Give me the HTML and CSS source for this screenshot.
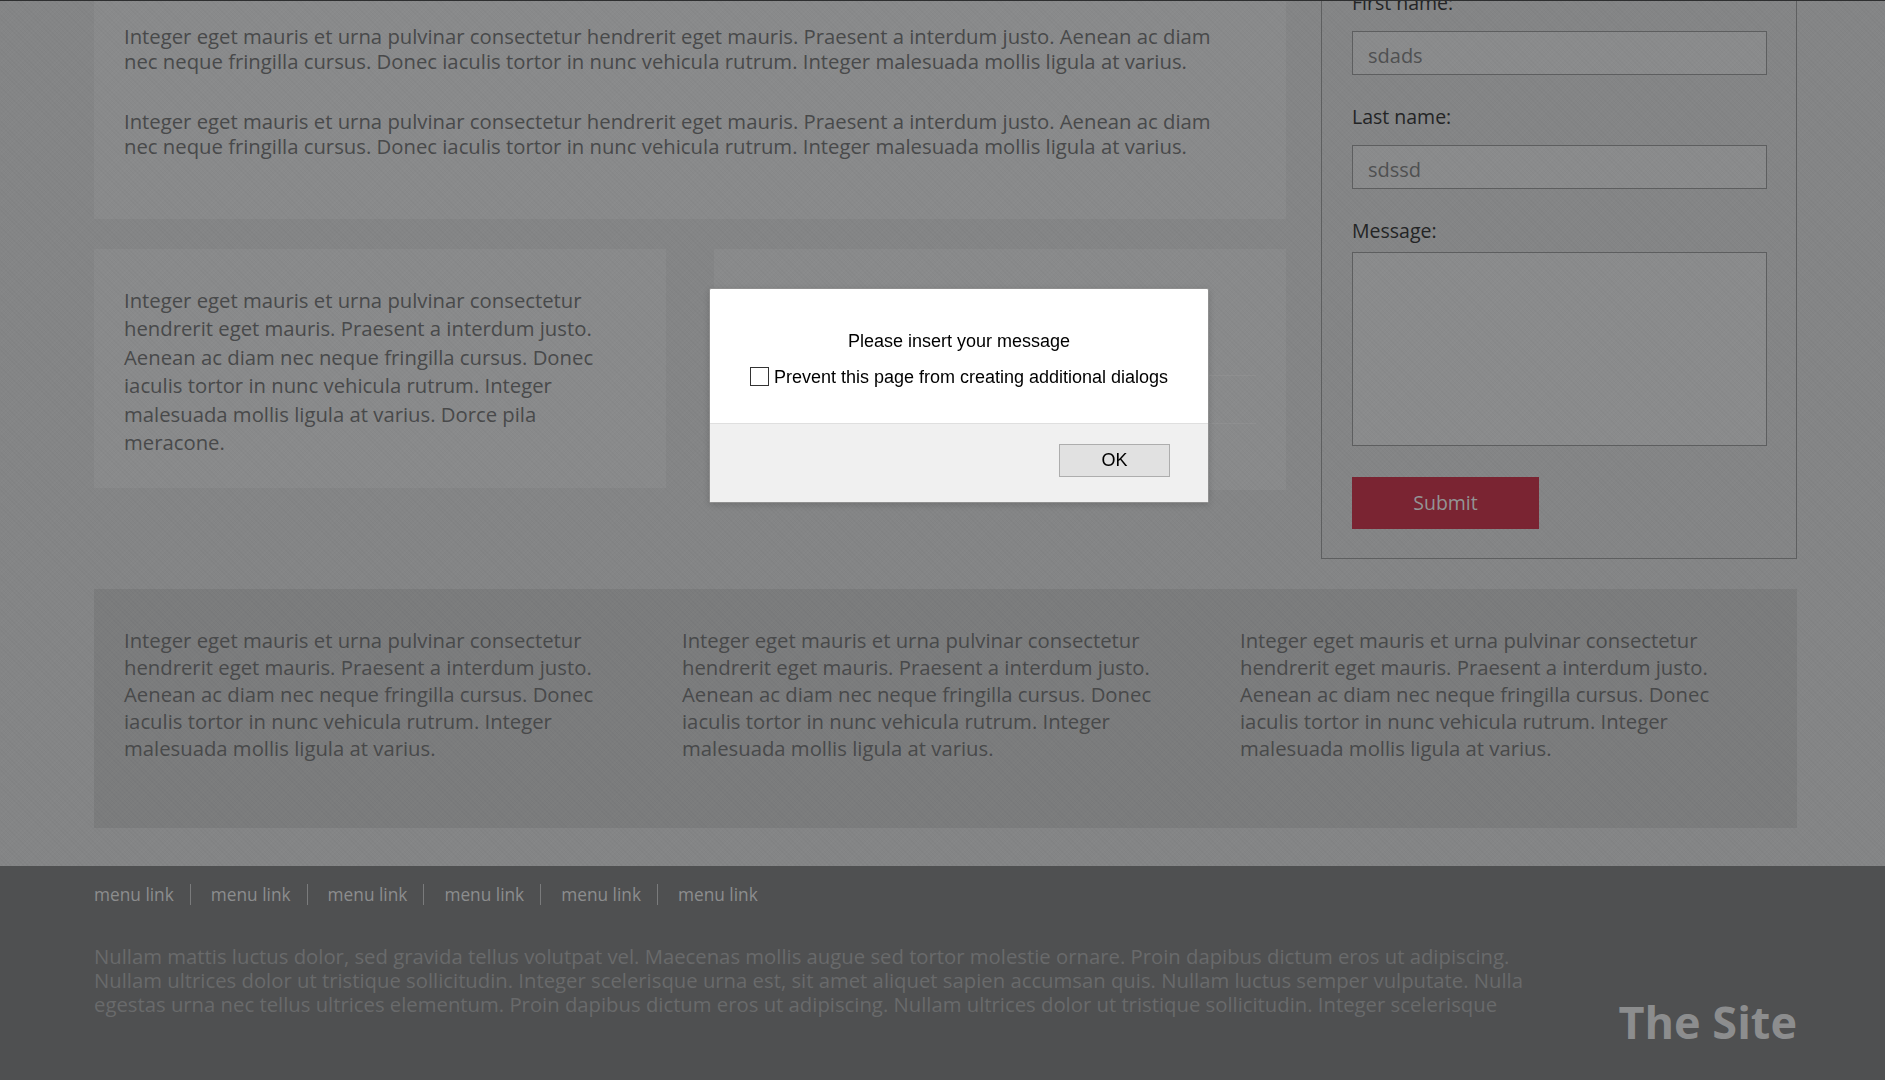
FILE: index.html
```html
<!DOCTYPE html>
<html lang="en">
<head>
<meta charset="utf-8">
<title>The Site</title>
<link rel="stylesheet" href="styles.css">
</head>
<body>
<div class="wrap">
  <div class="main">
    <div class="left-col">
      <section class="panel top-panel">
        <p>Integer eget mauris et urna pulvinar consectetur hendrerit eget mauris. Praesent a interdum justo. Aenean ac diam nec neque fringilla cursus. Donec iaculis tortor in nunc vehicula rutrum. Integer malesuada mollis ligula at varius.</p>
        <p>Integer eget mauris et urna pulvinar consectetur hendrerit eget mauris. Praesent a interdum justo. Aenean ac diam nec neque fringilla cursus. Donec iaculis tortor in nunc vehicula rutrum. Integer malesuada mollis ligula at varius.</p>
      </section>
      <div class="cards">
        <section class="panel card">
          <p>Integer eget mauris et urna pulvinar consectetur hendrerit eget mauris. Praesent a interdum justo. Aenean ac diam nec neque fringilla cursus. Donec iaculis tortor in nunc vehicula rutrum. Integer malesuada mollis ligula at varius. Dorce pila meracone.</p>
        </section>
        <section class="panel card card-right">
          <div class="rule"></div>
          <div class="rule"></div>
        </section>
      </div>
    </div>
    <form class="form-panel">
      <label class="lbl" for="fn">First name:</label>
      <input class="field" id="fn" type="text" value="sdads">
      <label class="lbl" for="ln">Last name:</label>
      <input class="field" id="ln" type="text" value="sdssd">
      <label class="lbl lbl-msg" for="msg">Message:</label>
      <textarea class="field area" id="msg"></textarea>
      <button class="submit" type="button">Submit</button>
    </form>
  </div>
  <section class="bottom-panel">
    <p>Integer eget mauris et urna pulvinar consectetur hendrerit eget mauris. Praesent a interdum justo. Aenean ac diam nec neque fringilla cursus. Donec iaculis tortor in nunc vehicula rutrum. Integer malesuada mollis ligula at varius.</p>
    <p>Integer eget mauris et urna pulvinar consectetur hendrerit eget mauris. Praesent a interdum justo. Aenean ac diam nec neque fringilla cursus. Donec iaculis tortor in nunc vehicula rutrum. Integer malesuada mollis ligula at varius.</p>
    <p>Integer eget mauris et urna pulvinar consectetur hendrerit eget mauris. Praesent a interdum justo. Aenean ac diam nec neque fringilla cursus. Donec iaculis tortor in nunc vehicula rutrum. Integer malesuada mollis ligula at varius.</p>
  </section>
</div>
<footer class="footer">
  <div class="footer-inner">
    <nav class="menu">
      <a href="#">menu link</a>
      <a href="#">menu link</a>
      <a href="#">menu link</a>
      <a href="#">menu link</a>
      <a href="#">menu link</a>
      <a href="#">menu link</a>
    </nav>
    <div class="footer-bottom">
      <p class="footer-text">Nullam mattis luctus dolor, sed gravida tellus volutpat vel. Maecenas mollis augue sed tortor molestie ornare. Proin dapibus dictum eros ut adipiscing. Nullam ultrices dolor ut tristique sollicitudin. Integer scelerisque urna est, sit amet aliquet sapien accumsan quis. Nullam luctus semper vulputate. Nulla egestas urna nec tellus ultrices elementum. Proin dapibus dictum eros ut adipiscing. Nullam ultrices dolor ut tristique sollicitudin. Integer scelerisque</p>
      <div class="site-name">The Site</div>
    </div>
  </div>
</footer>
<div class="dialog" role="alertdialog">
  <div class="dialog-body">
    <p class="dialog-msg">Please insert your message</p>
    <label class="dialog-check"><span class="box"></span>Prevent this page from creating additional dialogs</label>
  </div>
  <div class="dialog-foot">
    <button class="ok" type="button">OK</button>
  </div>
</div>
</body>
</html>
```

FILE: styles.css
```css
* { box-sizing: border-box; }

html, body {
  margin: 0;
  padding: 0;
  overflow: hidden;
  height: 100%;
}

body {
  background-color: #848586;
  background-image:
    repeating-linear-gradient(45deg, rgba(0,0,0,0.025) 0 1px, transparent 1px 3px),
    repeating-linear-gradient(-45deg, rgba(255,255,255,0.02) 0 1px, transparent 1px 3px);
  font-family: "Open Sans", "Lato", sans-serif;
  color: #48494a;
  border-top: 1px solid #2e2f30;
}

p { margin: 0; }

.wrap {
  width: 1703px;
  margin: -42px 0 0 94px;
}

.main {
  display: grid;
  grid-template-columns: 1192px 476px;
  column-gap: 35px;
}

.panel {
  background-color: rgba(255,255,255,0.045);
}

.top-panel {
  padding: 64.5px 30px 60px 30px;
  font-size: 20.3px;
  line-height: 25px;
}

.top-panel p { width: 1120px; }

.top-panel p + p { margin-top: 35px; }

.cards {
  display: grid;
  grid-template-columns: 572px 572px;
  column-gap: 48px;
  margin-top: 30px;
  align-items: start;
}

.card {
  padding: 37px 30px 30px 30px;
  font-size: 20.3px;
  line-height: 28.5px;
  height: 239px;
}

.card p { width: 490px; }

.card-right {
  height: 241px;
  padding-top: 126px;
}

.card-right .rule {
  height: 1px;
  background: rgba(255,255,255,0.05);
  margin-bottom: 47px;
}

.form-panel {
  display: flex;
  flex-direction: column;
  align-items: flex-start;
  border: 1px solid #5e5f60;
  padding: 31px 29px 29px 30px;
}

.lbl {
  font-size: 19.5px;
  line-height: 24px;
  color: #232425;
  margin-bottom: 15.5px;
}

.lbl-msg { margin-bottom: 8.5px; }

.field {
  display: block;
  width: 415px;
  height: 44px;
  margin: 0 0 30.5px 0;
  padding: 6px 15px 0 15px;
  border: 1px solid #5d5e5f;
  background-color: rgba(255,255,255,0.05);
  font-family: "Open Sans", "Lato", sans-serif;
  font-size: 20px;
  color: #4f5051;
  outline: none;
}

.area {
  height: 194px;
  resize: none;
  margin-bottom: 31px;
}

.submit {
  width: 187px;
  height: 52px;
  border: none;
  background-color: #7a2432;
  color: #939495;
  font-family: "Open Sans", "Lato", sans-serif;
  font-size: 19.5px;
  padding: 0;
}

.bottom-panel {
  margin-top: 30px;
  height: 239px;
  background-color: rgba(0,0,0,0.065);
  padding: 38px 30px 0 30px;
  display: grid;
  grid-template-columns: repeat(3, 490px);
  column-gap: 68px;
  font-size: 20.3px;
  line-height: 27px;
}

.footer {
  margin-top: 38px;
  background-color: #4f5051;
  height: 300px;
}

.footer-inner {
  width: 1703px;
  margin-left: 94px;
  padding-top: 18px;
}

.menu {
  display: flex;
  align-items: center;
}

.menu a {
  color: #8c8d8e;
  text-decoration: none;
  font-size: 17.3px;
  line-height: 21px;
  padding: 0 16px 0 20px;
  border-left: 1px solid #7a7b7c;
}

.menu a:first-child {
  padding-left: 0;
  border-left: none;
}

.footer-bottom {
  display: flex;
  justify-content: space-between;
  align-items: flex-start;
  margin-top: 39px;
}

.footer-text {
  width: 1460px;
  font-size: 20.3px;
  line-height: 24px;
  color: #696a6b;
}

.site-name {
  font-family: "Open Sans", "Lato", sans-serif;
  font-weight: 700;
  font-size: 45px;
  line-height: 1;
  color: #8c8d8e;
  margin-top: 55px;
  white-space: nowrap;
}

/* native-style alert dialog */
.dialog {
  position: fixed;
  left: 709px;
  top: 288px;
  width: 500px;
  height: 215px;
  background: #ffffff;
  border: 1px solid #8f8f8f;
  border-radius: 2px;
  font-family: "Liberation Sans", Arial, sans-serif;
  color: #000;
  display: flex;
  flex-direction: column;
  box-shadow: 0 2px 6px rgba(0,0,0,0.15);
}

.dialog-body {
  height: 134px;
  padding-top: 41px;
  display: flex;
  flex-direction: column;
  align-items: center;
}

.dialog-msg {
  font-size: 18px;
  line-height: 22px;
}

.dialog-check {
  display: flex;
  align-items: center;
  margin-top: 14px;
  font-size: 18px;
  line-height: 22px;
}

.box {
  display: inline-block;
  width: 19px;
  height: 19px;
  border: 1px solid #333;
  background: #fff;
  margin-right: 5px;
  position: relative;
  top: -1px;
}

.dialog-foot {
  flex: 1;
  background: #f0f0f0;
  border-top: 1px solid #dfdfdf;
  display: flex;
  justify-content: flex-end;
  align-items: flex-start;
  padding: 20px 38px 0 0;
}

.ok {
  width: 111px;
  height: 33px;
  background: #e1e1e1;
  border: 1px solid #adadad;
  font-family: "Liberation Sans", Arial, sans-serif;
  font-size: 18px;
  color: #000;
  padding: 0;
}
```
